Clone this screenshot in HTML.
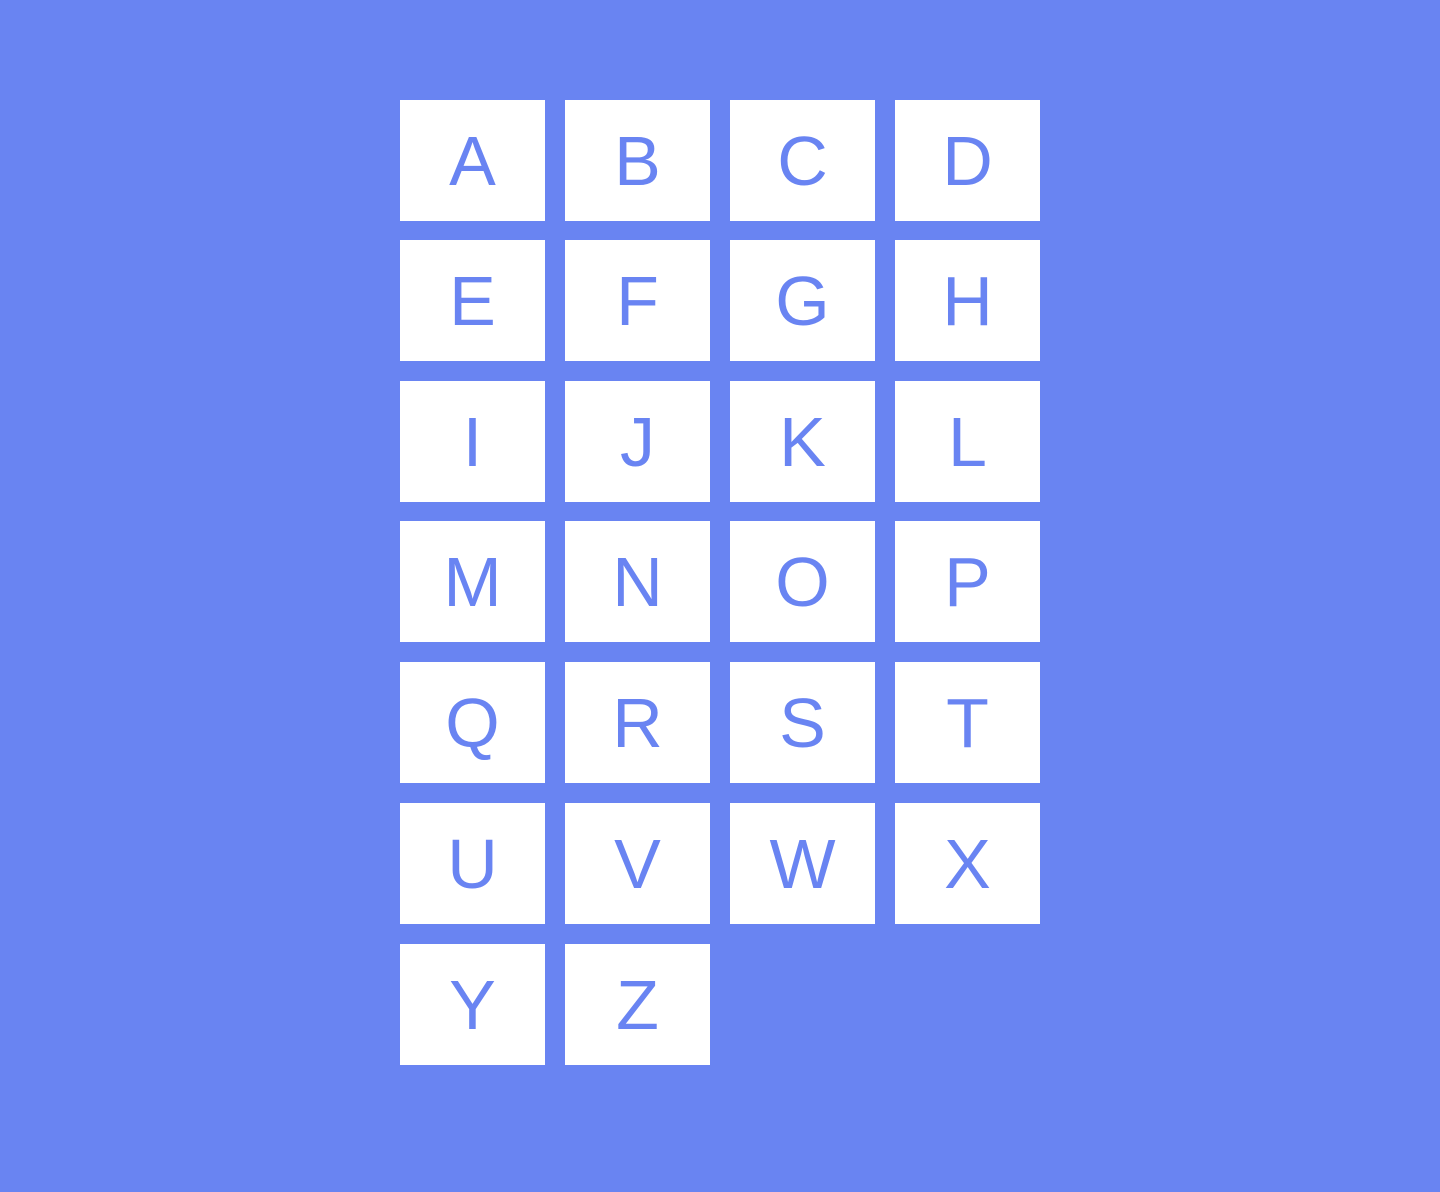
<!DOCTYPE html>
<html><head><style>
html,body{margin:0;padding:0;width:1440px;height:1192px;background:#6984f2;overflow:hidden}
.b{position:absolute;width:145px;height:121px;background:#fff;color:#6984f2;font-family:"Liberation Sans",sans-serif;font-size:70px;display:flex;align-items:center;justify-content:center;line-height:1}
</style></head><body>
<script>
var L="ABCDEFGHIJKLMNOPQRSTUVWXYZ",xs=[400,565,730,895],ys=[100,240,381,521,662,803,944];
for(var i=0;i<26;i++){var d=document.createElement('div');d.className='b';d.textContent=L[i];d.style.left=xs[i%4]+'px';d.style.top=ys[Math.floor(i/4)]+'px';document.body.appendChild(d);}
</script>
</body></html>
